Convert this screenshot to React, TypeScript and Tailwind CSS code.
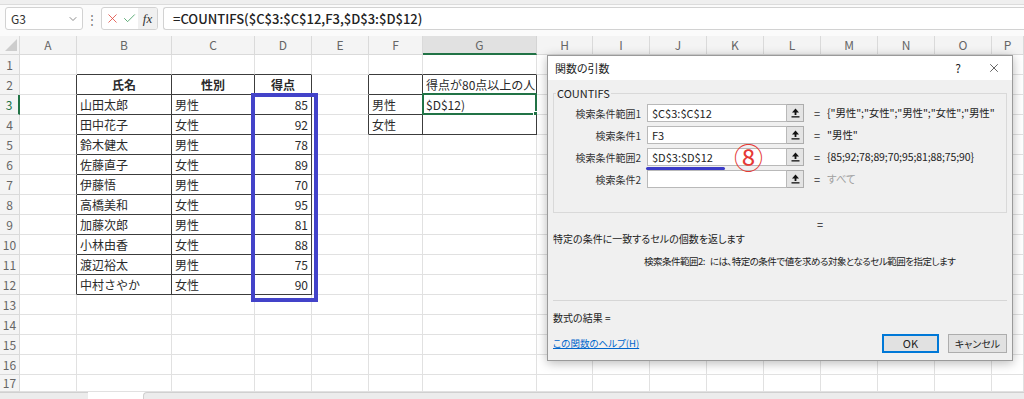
import { Check, ChevronDown, X } from "lucide-react";

const COLS = ["", "A", "B", "C", "D", "E", "F", "G", "H", "I", "J", "K", "L", "M", "N", "O", "P"];

const people: [string, string, number][] = [
  ["山田太郎", "男性", 85],
  ["田中花子", "女性", 92],
  ["鈴木健太", "男性", 78],
  ["佐藤直子", "女性", 89],
  ["伊藤悟", "男性", 70],
  ["高橋美和", "女性", 95],
  ["加藤次郎", "男性", 81],
  ["小林由香", "女性", 88],
  ["渡辺裕太", "男性", 75],
  ["中村さやか", "女性", 90],
];

// tables with dark borders: B2:D12 and F2:G4
function inTable(r: number, c: number) {
  return (r >= 2 && r <= 12 && c >= 2 && c <= 4) || (r >= 2 && r <= 4 && c >= 6 && c <= 7);
}

function cellContent(r: number, c: number): { t: string; cls: string } | null {
  if (r === 2) {
    if (c === 2) return { t: "氏名", cls: "justify-center font-bold" };
    if (c === 3) return { t: "性別", cls: "justify-center font-bold" };
    if (c === 4) return { t: "得点", cls: "justify-center font-bold" };
    if (c === 7) return { t: "得点が80点以上の人", cls: "justify-start" };
  }
  if (r >= 3 && r <= 12) {
    const p = people[r - 3];
    if (c === 2) return { t: p[0], cls: "justify-start" };
    if (c === 3) return { t: p[1], cls: "justify-start" };
    if (c === 4) return { t: String(p[2]), cls: "justify-end" };
  }
  if (r === 3 && c === 6) return { t: "男性", cls: "justify-start" };
  if (r === 3 && c === 7) return { t: "$D$12)", cls: "justify-start" };
  if (r === 4 && c === 6) return { t: "女性", cls: "justify-start" };
  return null;
}

function CollapseIcon() {
  return (
    <svg width="9" height="10" viewBox="0 0 9 10">
      <path d="M4.5 0.5 L8 4.5 H1 Z" fill="#111" />
      <rect x="3.6" y="4" width="1.8" height="3" fill="#111" />
      <rect x="0.5" y="8.2" width="8" height="1.3" fill="#111" />
    </svg>
  );
}

function ArgRow({ label, value, result, muted }: { label: string; value: string; result: string; muted?: boolean }) {
  return (
    <div className="flex h-[18px] items-center">
      <div className="w-[87px] text-right text-[10px] text-[#333]">{label}</div>
      <div className="ml-[6px] flex h-[18px] w-[140px] items-center border border-[#b9b9b9] bg-white px-[4px] text-[11px] text-[#222]">{value}</div>
      <div className="flex h-[18px] w-[17px] items-center justify-center border border-l-0 border-[#adadad] bg-[#e4e4e4]">
        <CollapseIcon />
      </div>
      <div className="ml-[10px] text-[11px] text-[#333]">=</div>
      <div className={"ml-[7px] whitespace-nowrap text-[10.5px] tracking-[-0.1px] " + (muted ? "text-[#a0a0a0]" : "text-[#222]")}>{result}</div>
    </div>
  );
}

export default function App() {
  const rows = Array.from({ length: 17 }, (_, i) => i + 1);
  return (
    <div className="relative h-[399px] w-[1024px] overflow-hidden bg-white font-['Noto_Sans_CJK_JP','Noto_Sans',sans-serif] text-[#222]">
      {/* formula bar */}
      <div className="h-[36px] bg-[#fbfbfb]">
        <div className="h-[5px] border-b border-[#dcdcdc] bg-[#efefef]" />
        <div className="mt-[2px] flex h-[23px] items-stretch pl-[5px]">
          <div className="flex w-[78px] items-center justify-between rounded-[3px] border border-[#d2d2d2] bg-white pl-[5px] pr-[3px] text-[12px] text-[#333]">
            <span>G3</span>
            <ChevronDown size={12} strokeWidth={1.5} className="text-[#666]" />
          </div>
          <div className="flex w-[18px] items-center justify-center text-[12px] text-[#777]">⋮</div>
          <div className="flex w-[57px] items-center overflow-hidden rounded-[3px] border border-[#d2d2d2] bg-white">
            <div className="flex w-[18px] justify-center pl-[3px]"><X size={15} strokeWidth={1.3} className="text-[#e0483e]" /></div>
            <div className="flex w-[18px] justify-center"><Check size={15} strokeWidth={1.3} className="text-[#3a9a5a]" /></div>
            <div className="flex h-full flex-1 items-center justify-center bg-[#f0f0f0] font-['Liberation_Serif',serif] text-[13px] italic text-[#333]">fx</div>
          </div>
          <div className="ml-[5px] flex flex-1 items-center rounded-l-[3px] border border-r-0 border-[#d2d2d2] bg-white pl-[9px] text-[13px] font-medium text-[#222]">
            =COUNTIFS($C$3:$C$12,F3,$D$3:$D$12)
          </div>
        </div>
      </div>

      {/* sheet grid */}
      <div className="grid grid-cols-[20px_57px_95px_83px_57px_57px_54px_114px_56px_57px_57px_57px_57px_57px_57px_57px_1fr] grid-rows-[19px_repeat(16,20px)_17px]">
        {COLS.map((h, c) => (
          <div
            key={"h" + c}
            className={
              "relative flex items-center justify-center text-[12px] text-[#666] " +
              (c === 7 ? "border-b-2 border-b-[#217346] bg-[#e1e1e1] border-r border-r-[#d4d4d4]" : "border-r border-b border-[#dadada] bg-[#f4f4f4]")
            }
          >
            {c === 0 ? (
              <svg width="12" height="12" viewBox="0 0 12 12" className="absolute bottom-[3px] right-[2px]">
                <path d="M12 0 V12 H0 Z" fill="#cdcdcd" />
              </svg>
            ) : (
              h
            )}
          </div>
        ))}
        {rows.map((r) =>
          COLS.map((_, c) => {
            if (c === 0) {
              return (
                <div
                  key={r + "-0"}
                  className={
                    "flex items-center justify-center border-b border-[#dadada] bg-[#f4f4f4] text-[12px] text-[#666] " +
                    (r === 3 ? "border-r-2 border-r-[#217346] text-[#217346]" : "border-r")
                  }
                >
                  {r}
                </div>
              );
            }
            const darkR = inTable(r, c) || inTable(r, c + 1);
            const darkB = inTable(r, c) || inTable(r + 1, c);
            const content = cellContent(r, c);
            return (
              <div
                key={r + "-" + c}
                className={
                  "relative flex items-center overflow-visible whitespace-nowrap px-[3px] text-[12px] text-[#2a2a2a] border-r border-b " +
                  (darkR ? "border-r-[#3c3c3c] " : "border-r-[#e1e1e1] ") +
                  (darkB ? "border-b-[#3c3c3c] " : "border-b-[#e1e1e1] ") +
                  (content ? content.cls : "")
                }
              >
                {content?.t}
                {r === 3 && c === 7 && (
                  <div className="absolute -left-[1px] -top-[2px] h-[22px] w-[115px] border-2 border-[#217346]">
                    <div className="absolute -bottom-[3px] -right-[3px] h-[5px] w-[5px] border border-white bg-[#217346]" />
                  </div>
                )}
              </div>
            );
          })
        )}
      </div>

      {/* sheet tabs */}
      <div className="flex h-[7px]">
        <div className="w-[88px] border-t border-[#d0d0d0] bg-[#ececec]" />
        <div className="w-[55px] bg-white" />
        <div className="flex-1 rounded-tl-[4px] border-l border-t border-[#d0d0d0] bg-[#ececec]" />
      </div>

      {/* highlight around D3:D12 */}
      <div className="absolute left-[251px] top-[93px] h-[209px] w-[67px] border-4 border-[#4343c9]" />

      {/* function arguments dialog */}
      <div className="absolute left-[547px] top-[55px] flex h-[306px] w-[466px] flex-col border border-[#9a9a9a] bg-[#f0f0f0] shadow-[0_2px_10px_rgba(0,0,0,0.28)] [font-feature-settings:'palt']">
        <div className="flex h-[24px] items-center bg-white pl-[7px] pr-[11px] text-[11px] text-[#222]">
          <span className="flex-1">関数の引数</span>
          <span className="mr-[26px] text-[12px]">?</span>
          <X size={14} strokeWidth={1.2} className="text-[#222]" />
        </div>
        <div className="flex flex-1 flex-col px-[5px]">
          <fieldset className="mt-[6px] border border-[#d9d9d9] pb-[24px] pt-[4px]">
            <legend className="ml-[2px] px-[1px] text-[11px] leading-[14px] text-[#222]">COUNTIFS</legend>
            <div className="flex flex-col gap-[4px]">
              <ArgRow label="検索条件範囲1" value="$C$3:$C$12" result={'{"男性";"女性";"男性";"女性";"男性"'} />
              <ArgRow label="検索条件1" value="F3" result={'"男性"'} />
              <div className="relative">
                <ArgRow label="検索条件範囲2" value="$D$3:$D$12" result="{85;92;78;89;70;95;81;88;75;90}" />
                <div className="absolute left-[92px] top-[19px] h-[2.5px] w-[79px] rounded-full bg-[#3b3bc8]" />
                <div className="absolute left-[180px] -top-[8px] text-[29px] leading-[32px] text-[#e53935]">⑧</div>
              </div>
              <ArgRow label="検索条件2" value="" result="すべて" muted />
            </div>
          </fieldset>
          <div className="mt-[4px] flex h-[14px] items-center pl-[264px] text-[11px] leading-none">=</div>
          <div className="mt-[1px] h-[14px] text-[10px] leading-[14px] text-[#222]">特定の条件に一致するセルの個数を返します</div>
          <div className="mt-[8px] h-[14px] whitespace-nowrap pl-[91px] text-[9.5px] leading-[14px] tracking-[-0.5px] text-[#222]">
            検索条件範囲2:&nbsp;&nbsp;&nbsp;には、特定の条件で値を求める対象となるセル範囲を指定します
          </div>
          <div className="mt-[32px] border-t border-[#d6d6d6]" />
          <div className="mt-[10px] h-[14px] text-[10px] leading-[14px] text-[#222]">数式の結果 =</div>
          <div className="mt-[9px] flex h-[19px] items-center">
            <span className="flex-1 text-[9.5px] text-[#0066cc] underline">この関数のヘルプ(H)</span>
            <div className="flex h-[19px] w-[57px] items-center justify-center border-2 border-[#0078d7] bg-[#e1e1e1] text-[11px] text-[#222]">OK</div>
            <div className="ml-[9px] flex h-[19px] w-[59px] items-center justify-center border border-[#adadad] bg-[#e1e1e1] text-[10px] text-[#222]">キャンセル</div>
          </div>
        </div>
      </div>
    </div>
  );
}
